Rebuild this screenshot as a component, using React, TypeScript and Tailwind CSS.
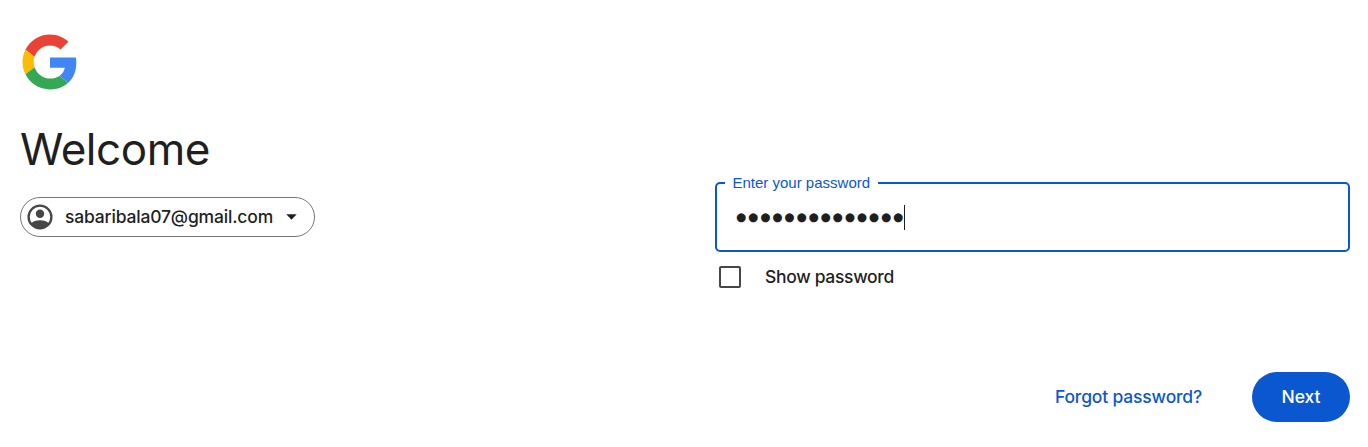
function Logo() {
  return (
    <svg className="ml-[2px] h-[56px] w-[56px]" viewBox="-0.45 -0.45 48.9 48.9" aria-hidden="true">
      <path fill="#EA4335" d="M24 9.5c3.54 0 6.71 1.22 9.21 3.6l6.85-6.85C35.9 2.38 30.47 0 24 0 14.62 0 6.51 5.38 2.56 13.22l7.98 6.19C12.43 13.72 17.74 9.5 24 9.5z" />
      <path fill="#4285F4" d="M46.98 24.55c0-1.57-.15-3.09-.38-4.55H24v9.02h12.94c-.58 2.96-2.26 5.48-4.78 7.18l7.73 6c4.51-4.18 7.09-10.36 7.09-17.65z" />
      <path fill="#FBBC05" d="M10.53 28.59c-.48-1.45-.76-2.99-.76-4.59s.27-3.14.76-4.59l-7.98-6.19C.92 16.46 0 20.12 0 24c0 3.88.92 7.54 2.56 10.78l7.97-6.19z" />
      <path fill="#34A853" d="M24 48c6.48 0 11.93-2.13 15.89-5.81l-7.73-6c-2.15 1.45-4.92 2.3-8.16 2.3-6.26 0-11.57-4.22-13.47-9.91l-7.98 6.19C6.51 42.62 14.62 48 24 48z" />
    </svg>
  );
}

function AccountIcon() {
  return (
    <svg className="h-[26px] w-[26px] shrink-0" viewBox="0 0 26 26" aria-hidden="true">
      <circle cx="13" cy="13" r="11.4" fill="none" stroke="#444746" strokeWidth="2.3" />
      <circle cx="13" cy="9.8" r="4.2" fill="#444746" />
      <path d="M3.600 19.600C5.800 17.300 9.300 16.200 13 16.200s7.200 1.100 9.400 3.400c-2.100 3.100-5.500 4.900-9.400 4.900s-7.300-1.800-9.400-4.900z" fill="#444746" />
    </svg>
  );
}

export default function App() {
  return (
    <main className="flex h-[447px] w-[1368px] justify-between overflow-hidden bg-white pr-[18px] pl-5 font-['Inter',sans-serif] text-[#1f1f1f]">
      <section className="flex flex-col items-start pt-[34px]">
        <Logo />
        <h1 className="mt-[31px] h-[56px] text-[44px] leading-[56px] tracking-[-0.45px]">Welcome</h1>
        <button className="mt-5 flex h-10 w-[295px] items-center rounded-full border border-[#747775] pl-[6px]">
          <AccountIcon />
          <span className="ml-3 w-[209px] text-left text-[17.5px] font-medium tracking-[-0.17px] whitespace-nowrap">sabaribala07@gmail.com</span>
          <svg className="ml-[12px] h-[6px] w-[11px]" viewBox="0 0 11 6" aria-hidden="true">
            <path d="M.3 .3h10.400L5.500 5.700z" fill="#1f1f1f" />
          </svg>
        </button>
      </section>

      <section className="flex w-[635px] flex-col pt-[173px]">
        <fieldset className="h-[79px] rounded-[5px] border-2 border-[#0b57d0] pl-2">
          <legend className="h-5 w-[153px] px-[7.5px] font-['Liberation_Sans',sans-serif] text-[15px] leading-5 whitespace-nowrap text-[#0b57d0]">Enter your password</legend>
          <div className="mt-[11px] flex h-[26px] items-center pl-[11px]">
            <span className="w-[168px] pt-[2px] font-['DejaVu_Sans',sans-serif] text-[11.7px] leading-none tracking-[1.88px] whitespace-nowrap">●●●●●●●●●●●●●●</span>
            <span className="h-[25px] w-px bg-[#1f1f1f]" />
          </div>
        </fieldset>
        <label className="mt-[13px] flex h-6 items-center pl-1">
          <span className="h-[22px] w-[22px] rounded-[2px] border-2 border-[#444746]" />
          <span className="ml-6 text-[17.5px] font-medium tracking-[-0.32px] whitespace-nowrap">Show password</span>
        </label>
        <div className="mt-[83px] flex h-[50px] items-center justify-end">
          <button className="mr-[50px] text-[17.5px] font-medium tracking-[-0.17px] whitespace-nowrap text-[#0b57d0]">Forgot password?</button>
          <button className="h-[50px] w-[98px] rounded-full bg-[#0b57d0] text-[17.5px] font-medium text-white">Next</button>
        </div>
      </section>
    </main>
  );
}
